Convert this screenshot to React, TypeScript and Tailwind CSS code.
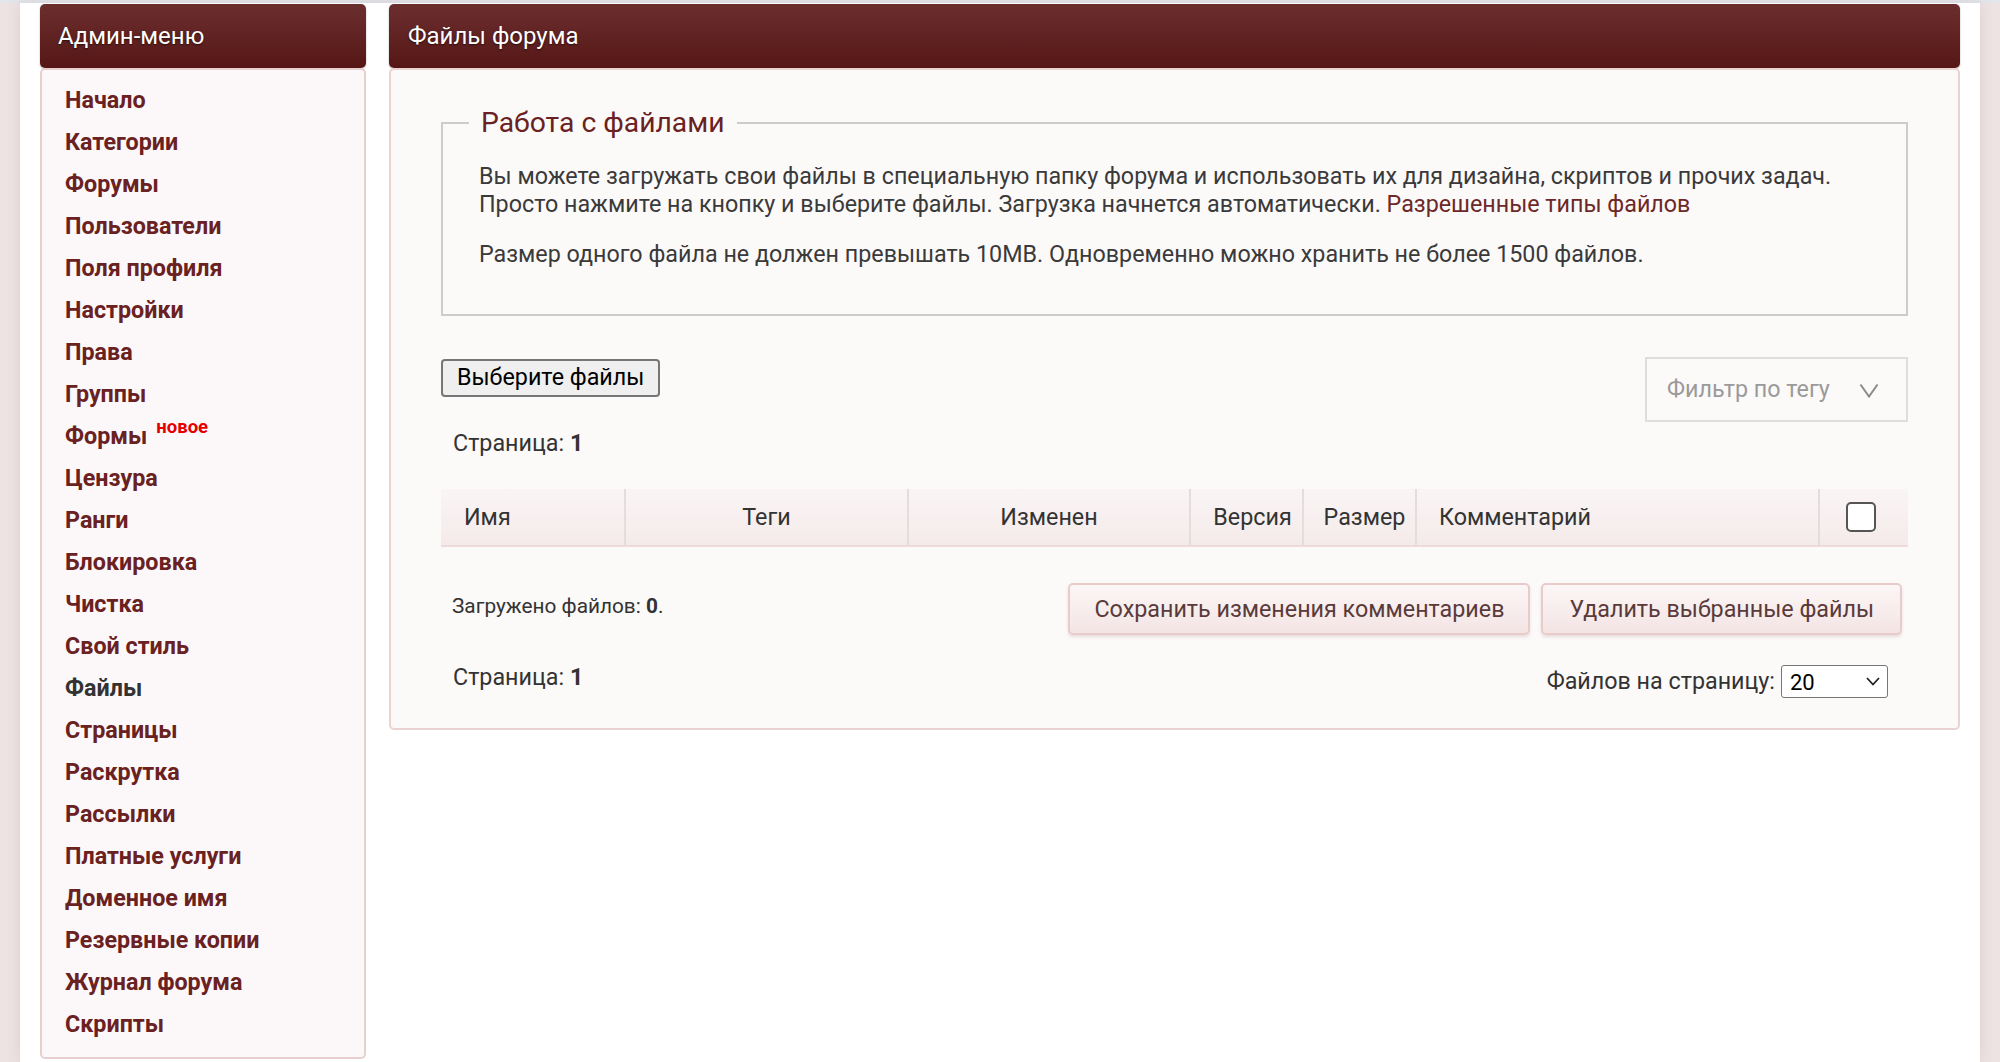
import React from "react";

const menu = [
  "Начало",
  "Категории",
  "Форумы",
  "Пользователи",
  "Поля профиля",
  "Настройки",
  "Права",
  "Группы",
  "Формы",
  "Цензура",
  "Ранги",
  "Блокировка",
  "Чистка",
  "Свой стиль",
  "Файлы",
  "Страницы",
  "Раскрутка",
  "Рассылки",
  "Платные услуги",
  "Доменное имя",
  "Резервные копии",
  "Журнал форума",
  "Скрипты",
];

const headerCls =
  "h-[64px] rounded-[5px] bg-gradient-to-b from-[#6b2e2e] to-[#561616] flex items-center text-white text-[24px] [text-shadow:0_1px_2px_rgba(0,0,0,0.6)] shadow-[0_1px_2px_rgba(0,0,0,0.3)]";

export default function App() {
  return (
    <div
      className="min-h-screen bg-[#eee3e3] text-[#333]"
      style={{ fontFamily: "Roboto, 'Noto Sans', sans-serif" }}
    >
      <div className="h-[3px] bg-[#e3e6ec]" />
      <div className="mx-[20px] bg-white px-[20px] pt-[1px] shadow-[0_0_14px_rgba(90,40,40,0.12)] min-h-[1059px]">
        <div className="flex gap-[23px] items-start">
          {/* Sidebar */}
          <div className="w-[326px] shrink-0">
            <div className={headerCls + " pl-[18px]"}>Админ-меню</div>
            <div className="border-2 border-[#e8cfcf] rounded-[5px] bg-[#fcf8f9] pt-[9px] pb-[12px] pl-[23px]">
              {menu.map((m) => (
                <div
                  key={m}
                  className={
                    "h-[42px] flex items-center text-[23.3px] font-bold " +
                    (m === "Файлы" ? "text-[#333]" : "text-[#6a2121]")
                  }
                >
                  <span>{m}</span>
                  {m === "Формы" && (
                    <span className="ml-[9px] -mt-[16px] text-[18.5px] font-bold text-[#e40000]">
                      новое
                    </span>
                  )}
                </div>
              ))}
            </div>
          </div>

          {/* Main */}
          <div className="flex-1">
            <div className={headerCls + " pl-[19px]"}>Файлы форума</div>
            <div className="border-2 border-[#ebd2d2] rounded-[5px] bg-[#fcf9f9] px-[50px] pt-[38px] pb-[29px] text-[23.3px]">
              <fieldset className="border-2 border-[#cccccc] pl-[36px] pr-[30px] pb-[46px]">
                <legend className="-ml-[10px] px-[12px] text-[28.3px] leading-[30px] text-[#6a2121]">
                  Работа с файлами
                </legend>
                <p className="mt-[24px] leading-[28px] text-[#3a3a3a]">
                  Вы можете загружать свои файлы в специальную папку форума и
                  использовать их для дизайна, скриптов и прочих задач.
                  <br />
                  Просто нажмите на кнопку и выберите файлы. Загрузка начнется
                  автоматически.{" "}
                  <a className="text-[#6d2828]">Разрешенные типы файлов</a>
                </p>
                <p className="mt-[22px] leading-[28px] text-[#3a3a3a]">
                  Размер одного файла не должен превышать 10MB. Одновременно
                  можно хранить не более 1500 файлов.
                </p>
              </fieldset>

              <div className="mt-[41px] flex justify-between items-start h-[65px]">
                <button className="mt-[2px] h-[38px] px-[14px] bg-[#efefef] border-2 border-[#767676] rounded-[4px] text-[23.3px] leading-none text-black">
                  Выберите файлы
                </button>
                <div className="w-[263px] h-[65px] border-2 border-[#dedede] flex items-center pl-[20px] pr-[27px] justify-between text-[#9a9a9a]">
                  <span>Фильтр по тегу</span>
                  <svg width="20" height="15" viewBox="0 0 20 15" className="mt-[2px]">
                    <path d="M1.5 1.5 L10 13.5 L18.5 1.5" fill="none" stroke="#8a8a8a" strokeWidth="2" />
                  </svg>
                </div>
              </div>

              <p className="mt-[7px] pl-[12px] leading-[28px]">
                Страница: <b>1</b>
              </p>

              <div className="mt-[32px] flex h-[58px] bg-gradient-to-b from-[#faf5f5] to-[#f5eaea] border-b-2 border-[#eedada] text-[#333]">
                <div className="w-[185px] flex items-center pl-[23px] border-r-2 border-[#e3dddd]">
                  Имя
                </div>
                <div className="w-[283px] flex items-center justify-center border-r-2 border-[#e3dddd]">
                  Теги
                </div>
                <div className="w-[282px] flex items-center justify-center border-r-2 border-[#e3dddd]">
                  Изменен
                </div>
                <div className="w-[113px] flex items-center justify-center pl-[12px] border-r-2 border-[#e3dddd]">
                  Версия
                </div>
                <div className="w-[113px] flex items-center justify-center pl-[10px] border-r-2 border-[#e3dddd]">
                  Размер
                </div>
                <div className="w-[403px] flex items-center pl-[22px] border-r-2 border-[#e3dddd]">
                  Комментарий
                </div>
                <div className="flex-1 flex items-center justify-center pr-[6px]">
                  <input
                    type="checkbox"
                    className="appearance-none w-[30px] h-[30px] border-2 border-[#555] rounded-[5px] bg-white"
                  />
                </div>
              </div>

              <div className="mt-[36px] flex items-center justify-between">
                <p className="pl-[11px] -mt-[4px] text-[20.8px]">
                  Загружено файлов: <b>0</b>.
                </p>
                <div className="flex gap-[11px] mr-[6px]">
                  <button className="h-[52px] px-[24px] border-2 border-[#e8cbcb] rounded-[5px] bg-gradient-to-b from-[#fcf6f6] to-[#f4e4e4] text-[#5a3a3a] shadow-[0_2px_3px_rgba(120,60,60,0.15)]">
                    Сохранить изменения комментариев
                  </button>
                  <button className="h-[52px] px-[26px] border-2 border-[#e8cbcb] rounded-[5px] bg-gradient-to-b from-[#fcf6f6] to-[#f4e4e4] text-[#5a3a3a] shadow-[0_2px_3px_rgba(120,60,60,0.15)]">
                    Удалить выбранные файлы
                  </button>
                </div>
              </div>

              <div className="mt-[29px] flex items-center justify-between">
                <p className="pl-[12px] -mt-[8px]">
                  Страница: <b>1</b>
                </p>
                <div className="flex items-center mr-[20px]">
                  <span className="mr-[6px]">Файлов на страницу:</span>
                  <div className="relative w-[107px] h-[33px]">
                    <select className="appearance-none w-full h-full border border-[#767676] rounded-[3px] bg-white pl-[8px] text-[22px] text-black">
                      <option>20</option>
                    </select>
                    <svg
                      width="14"
                      height="9"
                      viewBox="0 0 14 9"
                      className="absolute right-[8px] top-[12px] pointer-events-none"
                    >
                      <path d="M1 1 L7 7.5 L13 1" fill="none" stroke="#222" strokeWidth="1.8" />
                    </svg>
                  </div>
                </div>
              </div>
            </div>
          </div>
        </div>
      </div>
    </div>
  );
}
